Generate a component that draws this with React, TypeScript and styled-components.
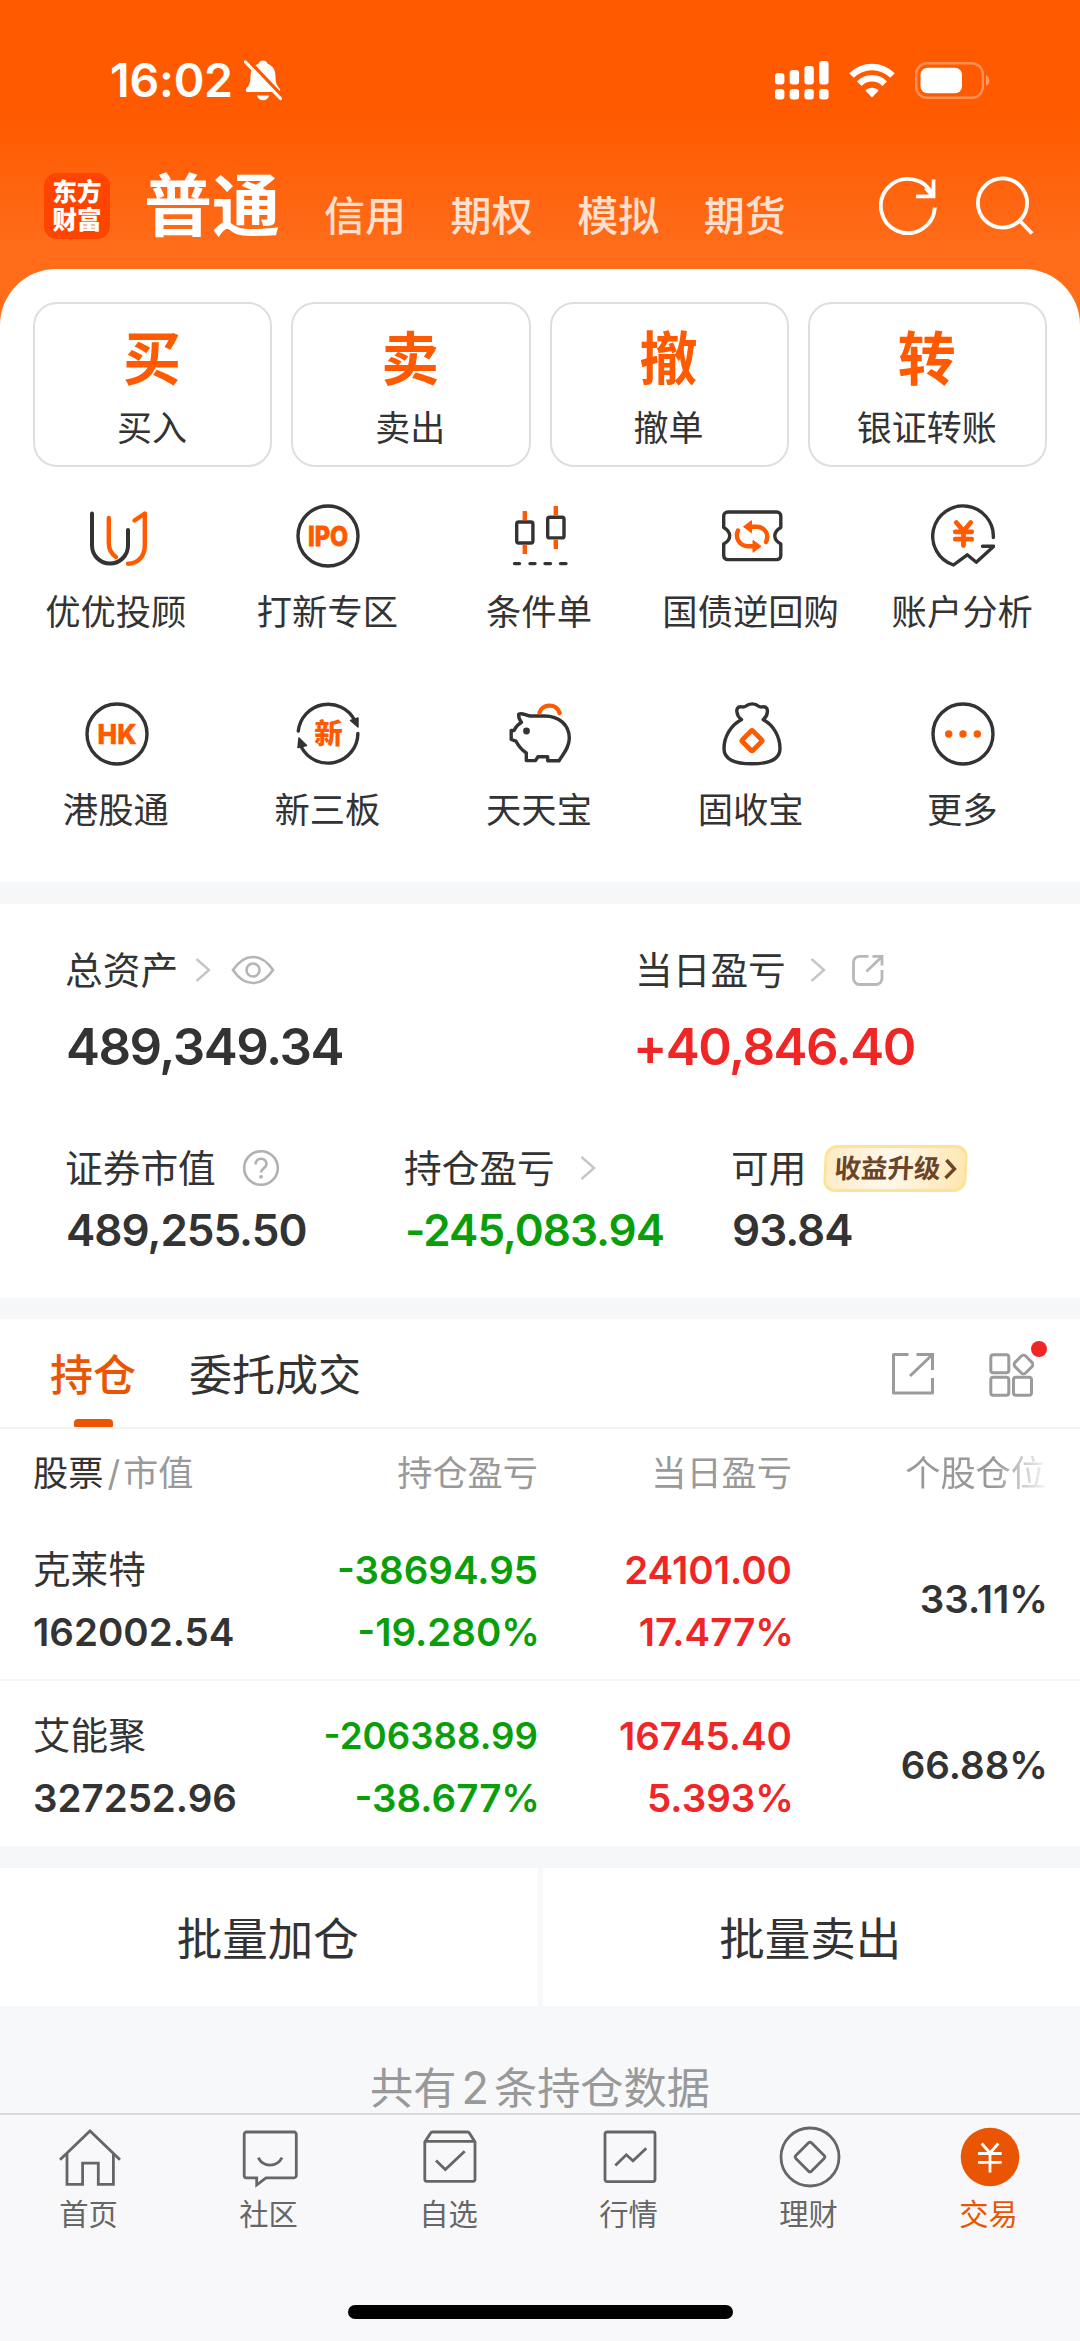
import React from "react";
import styled, { createGlobalStyle } from "styled-components";

const ORANGE = "#ff5a00";
const TAB_ORANGE = "#ea5504";
const INK = "#333333";
const RED = "#f02626";
const GREEN = "#0a9f0a";
const BAND = "#f5f7f9";

const GlobalStyle = createGlobalStyle`
  * { box-sizing: border-box; }
  body {
    margin: 0;
    background: #f8f8fa;
    color: ${INK};
    font-family: Inter, "Noto Sans CJK SC", sans-serif;
  }
  svg { display: block; flex: none; }
`;

const Screen = styled.div`
  width: 1080px;
  height: 2341px;
  display: flex;
  flex-direction: column;
  overflow: hidden;
  background: #f7f8fa;
`;

/* ---------- header ---------- */

const Top = styled.header`
  background: linear-gradient(180deg, ${ORANGE} 0, ${ORANGE} 112px, #ff6c1a 250px, #ff6c1a 340px);
`;

const StatusBar = styled.div`
  height: 160px;
  padding: 0 89px 0 110px;
  display: flex;
  align-items: center;
  color: #fff;
`;

const Clock = styled.span`
  font-size: 46.5px;
  line-height: 60px;
  font-weight: 600;
  letter-spacing: -0.2px;
  width: 134px;
  white-space: nowrap;
`;

const StatusIcons = styled.div`
  margin-left: auto;
  display: flex;
  align-items: center;
  gap: 20px;
`;

const NavBar = styled.nav`
  height: 109px;
  padding: 13px 45px 0 44px;
  display: flex;
  align-items: flex-start;
  color: #fff;
`;

const Logo = styled.div`
  width: 66px;
  height: 66px;
  border-radius: 13px;
  background: #ff4400;
  display: flex;
  flex-direction: column;
  align-items: center;
  justify-content: center;
  font-size: 24.5px;
  line-height: 28px;
  font-weight: 900;
`;

const Title = styled.h1`
  margin: 0 0 0 34px;
  font-size: 68px;
  line-height: 66px;
  font-weight: 700;
`;

const NavTabs = styled.div`
  margin: 16px 0 0 44px;
  display: flex;
  gap: 44.6px;
  font-size: 41px;
  line-height: 54px;
  font-weight: 500;
  color: #ffdfcd;
`;

const NavIcons = styled.div`
  margin: 1px 0 0 auto;
  display: flex;
  gap: 36px;
`;

const Panel = styled.main`
  height: 613px;
  padding-top: 33px;
  background: #fff;
  border-radius: 56px 56px 0 0;
`;

const Cards = styled.div`
  padding: 0 33px;
  display: grid;
  grid-template-columns: repeat(4, 1fr);
  gap: 19px;
`;

const Card = styled.button`
  height: 165px;
  padding: 20px 1px 0 0;
  border: 2px solid #dedede;
  border-radius: 24px;
  background: #fff;
  font-family: inherit;
  color: ${INK};
  display: flex;
  flex-direction: column;
  align-items: center;
`;

const CardGlyph = styled.span`
  font-size: 58px;
  line-height: 70px;
  font-weight: 700;
  color: ${ORANGE};
`;

const CardLabel = styled.span`
  margin-top: 10px;
  font-size: 35px;
  line-height: 48px;
`;

const Features = styled.div`
  padding: 37px 11px 0;
  display: grid;
  grid-template-columns: repeat(5, 1fr);
  grid-auto-rows: 198px;
`;

const Feature = styled.div`
  display: flex;
  flex-direction: column;
  align-items: center;
  font-size: 35.3px;
  line-height: 48px;
  gap: 21px;
`;

const FeatureLabel = styled.span`
  padding-right: 2px;
`;

/* ---------- assets ---------- */

const Band = styled.div<{ $h: number }>`
  height: ${(p) => p.$h}px;
  flex: none;
  background: ${BAND};
`;

const Assets = styled.section`
  height: 394px;
  padding: 42px 0 0 65px;
  background: #fff;
`;

const AssetRow = styled.div<{ $cols: string; $top?: number }>`
  display: grid;
  grid-template-columns: ${(p) => p.$cols};
  margin-top: ${(p) => p.$top ?? 0}px;
`;

const AssetLabel = styled.div`
  height: 48px;
  display: flex;
  align-items: center;
  font-size: 37.7px;
  line-height: 48px;
  white-space: nowrap;
`;

const IconGap = styled.span<{ $w: number }>`
  display: flex;
  margin-left: ${(p) => p.$w}px;
`;

const BigNumber = styled.div<{ $color?: string }>`
  margin: 23px 0 0 ${(p) => (p.$color ? -2 : 1)}px;
  font-size: 51px;
  line-height: 60px;
  font-weight: 600;
  letter-spacing: -1.5px;
  color: ${(p) => p.$color ?? INK};
`;

const MidNumber = styled.div<{ $color?: string }>`
  margin-top: 13px;
  padding-left: 1px;
  font-size: 44px;
  line-height: 50px;
  font-weight: 600;
  letter-spacing: -1px;
  color: ${(p) => p.$color ?? INK};
`;

const Badge = styled.span`
  margin-left: 18px;
  width: 143px;
  height: 47px;
  border: 3px solid #fde39a;
  border-radius: 12px;
  transform: skewX(-3deg);
  background: linear-gradient(100deg, #fdebc4 0%, #fff8ea 45%, #fff4dc 58%, #fee6b0 100%);
  display: flex;
  align-items: center;
  justify-content: center;
  gap: 3px;
  font-size: 26.5px;
  line-height: 41px;
  font-weight: 700;
  color: #6a452a;
`;

/* ---------- holdings ---------- */

const Holdings = styled.section`
  background: #fff;
`;

const TabRow = styled.div`
  height: 110px;
  padding: 0 34px 0 50px;
  border-bottom: 2px solid #f2f3f4;
  display: flex;
  align-items: stretch;
`;

const Tab = styled.div<{ $active?: boolean }>`
  margin-right: 53px;
  padding-top: 26px;
  display: flex;
  flex-direction: column;
  align-items: center;
  justify-content: space-between;
  font-size: 43px;
  line-height: 60px;
  font-weight: ${(p) => (p.$active ? 500 : 400)};
  color: ${(p) => (p.$active ? TAB_ORANGE : INK)};
`;

const Underline = styled.i`
  width: 39px;
  height: 8px;
  border-radius: 4px 4px 1px 1px;
  background: ${TAB_ORANGE};
`;

const TabTools = styled.div`
  margin-left: auto;
  padding-top: 33px;
  display: flex;
  gap: 53px;
`;

const GridTool = styled.div`
  position: relative;
  width: 58px;
`;

const RedDot = styled.i`
  position: absolute;
  left: 42.5px;
  top: -11px;
  width: 16px;
  height: 16px;
  border-radius: 50%;
  background: ${RED};
`;

const Row = styled.div<{ $h: number; $line?: boolean }>`
  height: ${(p) => p.$h}px;
  padding: 0 34px 0 33px;
  display: grid;
  grid-template-columns: 252px 253px 254px 254px;
  align-items: center;
  border-bottom: ${(p) => (p.$line ? "2px solid #f4f5f6" : "none")};
`;

const Head = styled.div<{ $right?: boolean; $fade?: boolean }>`
  font-size: 35.2px;
  line-height: 50px;
  color: #999;
  text-align: ${(p) => (p.$right ? "right" : "left")};
  ${(p) => p.$fade && "mask-image: linear-gradient(90deg, #000 80%, rgba(0,0,0,.1) 100%);"}
  b { font-weight: 400; color: ${INK}; }
  em { font-style: normal; margin: 0 3px 0 4px; }
`;

const Cell = styled.div<{ $right?: boolean; $color?: string; $drop?: number }>`
  display: flex;
  flex-direction: column;
  padding-top: ${(p) => p.$drop ?? 7}px;
  text-align: ${(p) => (p.$right ? "right" : "left")};
  font-size: 38.5px;
  line-height: 62px;
  font-weight: 600;
  color: ${(p) => p.$color ?? INK};
  white-space: nowrap;
`;

/* Amounts of ten characters and more are set a little smaller to stay in the column. */
const Amount = styled.span<{ $long?: boolean }>`
  font-size: ${(p) => (p.$long ? 36.7 : 38.5)}px;
`;

const Percent = styled.span`
  margin-right: -2px;
`;

const StockName = styled.span`
  font-size: 37.6px;
  font-weight: 400;
`;

const Actions = styled.div`
  display: grid;
  grid-template-columns: 1fr 1fr;
  gap: 5px;
`;

const Action = styled.button`
  height: 138px;
  padding: 0 2px 2px 0;
  border: 0;
  background: #fff;
  font-family: inherit;
  font-size: 45.5px;
  color: ${INK};
`;

const Summary = styled.div`
  height: 107px;
  padding-top: 52px;
  text-align: center;
  font-size: 43.2px;
  line-height: 60px;
  color: #999;
  span { margin: 0 5px; font-size: 45px; }
`;

/* ---------- bottom bar ---------- */

const BottomBar = styled.footer`
  flex: 1;
  background: #f8f8fa;
  border-top: 2px solid #d9d9dc;
  display: flex;
  flex-direction: column;
  align-items: center;
`;

const BottomTabs = styled.div`
  width: 100%;
  padding-top: 10px;
  display: grid;
  grid-template-columns: repeat(6, 1fr);
`;

const BottomTab = styled.div<{ $active?: boolean }>`
  display: flex;
  flex-direction: column;
  align-items: center;
  gap: 6px;
  font-size: 29.3px;
  line-height: 40px;
  color: ${(p) => (p.$active ? TAB_ORANGE : "#666")};
  span { padding-right: 3px; }
`;

const HomeIndicator = styled.div`
  width: 385px;
  height: 14px;
  margin-top: 70px;
  border-radius: 7px;
  background: #000;
`;

/* ---------- icons ---------- */

const Ink = ({ children }: { children: React.ReactNode }) => (
  <g fill="none" stroke={INK} strokeWidth={3.4} strokeLinecap="round" strokeLinejoin="round">{children}</g>
);
const Hot = ({ children, w = 4.4 }: { children: React.ReactNode; w?: number }) => (
  <g fill="none" stroke={ORANGE} strokeWidth={w} strokeLinecap="round" strokeLinejoin="round">{children}</g>
);

const featureIcons: Record<string, React.ReactNode> = {
  advisor: (
    <>
      <Ink><path strokeWidth={4} d="M7 9.5V41.5a18 18 0 0 0 36 0V26" /></Ink>
      <Hot><path d="M23.8 14V39.5c0 6.5 3 10.5 7.2 13.5M49.5 16.5L59.8 9.5V41.5c0 10-6 18-16.8 18.3" /></Hot>
    </>
  ),
  ipo: (
    <>
      <Ink><circle cx="32" cy="32" r="30" /></Ink>
      <text x="32" y="41.7" textAnchor="middle" textLength="40" lengthAdjust="spacingAndGlyphs" fontSize="26.5" fontWeight="800" fill={ORANGE} stroke={ORANGE} strokeWidth=".8" strokeLinejoin="round">IPO</text>
    </>
  ),
  candles: (
    <>
      <Ink>
        <rect x="8.7" y="18" width="16.2" height="21" rx="2" />
        <rect x="39.7" y="13.3" width="16.3" height="20.6" rx="2" />
        <path d="M6.500 59.600h5M22 59.600h5M37 59.600h5.500M52.500 59.600h5.500" />
      </Ink>
      <Hot><path strokeLinecap="butt" d="M16.8 7v9.200M16.800 40.700v9.300M47.800 2v9.500M47.800 35.600v9.500" /></Hot>
    </>
  ),
  ticket: (
    <>
      <Ink><path d="M7.700 8H56.800a4 4 0 0 1 4 4V23.500c-3.500 2-6 4.500-6 8.300s2.500 6.300 6 8.300V51.600a4 4 0 0 1-4 4H7.700a4 4 0 0 1-4-4V40.100c3.500-2 6-4.500 6-8.300s-2.500-6.300-6-8.300V12a4 4 0 0 1 4-4Z" /></Ink>
      <Hot><path d="M31 22.700h5.500c8 0 13.200 7.500 9.500 15.300M33 42.300h-5C20 42 14.500 34.500 18 26.500" /></Hot>
      <path d="M23.500 22.700l8-6v12zM41 42.300l-8-6v12z" fill={ORANGE} stroke={ORANGE} strokeLinejoin="round" />
    </>
  ),
  analysis: (
    <>
      <Ink><path d="M62.300 33.500A30.300 30.300 0 1 0 22.500 61L36.200 50.800L45.300 58.300L62.800 42.300H51.500" /></Ink>
      <Hot w={4.8}><path d="M25.300 18.500l7.200 8.500 7.200-8.500M32.500 27v14.500M24.300 27.800h16.400M24.300 35.200h16.400" /></Hot>
    </>
  ),
  hk: (
    <>
      <Ink><circle cx="32" cy="32" r="30" /></Ink>
      <text x="32" y="42" textAnchor="middle" textLength="39" lengthAdjust="spacingAndGlyphs" fontSize="27.5" fontWeight="800" fill={ORANGE} stroke={ORANGE} strokeWidth=".5" strokeLinejoin="round">HK</text>
    </>
  ),
  neeq: (
    <>
      <Ink>
        <path d="M2.300 29A30 30 0 0 1 58.800 18.500M61.900 31.500A30 30 0 0 1 5.300 45" />
      </Ink>
      <path d="M54.500 18.500l7.500-2.500v9zM3 36l7.500 7.500-8.500 2z" fill={INK} stroke={INK} strokeWidth="1.500" strokeLinejoin="round" />
      <text x="32.500" y="42" textAnchor="middle" fontSize="28.500" fontWeight="900" fill={ORANGE}>新</text>
    </>
  ),
  pig: (
    <>
      <Ink><path d="M10.700 12.300C14 10.300 17.500 13.500 22 14H34C52 13 61.300 24 61.300 36C61.300 46 55 52 51 58.800H39.700V54.800H30L27.500 58.600H18.300V51C12.500 47 10 43 8 39.200L3.200 37.500V28.500H6C8 24.500 10.500 22 13.500 20.300C11.500 18 10.500 15.500 10.700 12.300Z" /></Ink>
      <circle cx="18.500" cy="29" r="3.400" fill={INK} />
      <Hot><path d="M31.500 10.500C34 2 48.500.5 51.700 11" /></Hot>
    </>
  ),
  bag: (
    <>
      <Ink><path d="M21.500 17.700C16.500 14 14.500 4.800 20.500 4.800C22.500 4.800 24 5.500 26 4C29 1.200 35.500 1.200 38.200 4C40.200 5.500 41.500 4.800 43.500 4.800C49.500 4.800 48 14 43.200 17.700C54 23 60 35.500 60 46.500C60 57.500 50 61.800 32 61.800S4 57.500 4 46.500C4 35.500 10.500 23 21.500 17.700" /></Ink>
      <Hot w={4.8}><rect x="24.500" y="31.200" width="15" height="15" rx="1.500" transform="rotate(45 32 38.700)" /></Hot>
    </>
  ),
  more: (
    <>
      <Ink><circle cx="32" cy="32" r="30" /></Ink>
      <g fill={ORANGE}><circle cx="17.700" cy="32" r="3.700" /><circle cx="32" cy="32" r="3.700" /><circle cx="46.300" cy="32" r="3.700" /></g>
    </>
  ),
};

const bottomIcons: Record<string, React.ReactNode> = {
  home: <path d="M2 34.800L32 6L62 34.800M9 28.500V59.300H24.600V38.200H40.300V59.300H55.400V28.500" />,
  community: <path d="M8.500 7H56a2.300 2.300 0 0 1 2.300 2.300V50.500a2.300 2.300 0 0 1-2.300 2.300H28L18.700 60V52.800H8.500a2.300 2.300 0 0 1-2.300-2.300V9.300A2.300 2.300 0 0 1 8.500 7ZM20.300 32.600C25 42.500 39 42.500 44 32.600" />,
  watch: <path d="M6.800 17V54.300a2 2 0 0 0 2 2H55a2 2 0 0 0 2-2V17L51.500 8.200A2.300 2.300 0 0 0 49.500 7H14.500a2.300 2.300 0 0 0-2 1.200ZM7 16.400H57M18 35.600L27.300 44.600L46.700 26.300" />,
  market: <><rect x="7" y="7" width="50" height="49.600" rx="2" /><path d="M17.300 40.600L28.300 29.800L35 35.800L48.300 23.300" /></>,
  wealth: <><circle cx="32" cy="32" r="29" /><rect x="21" y="21" width="22" height="22" rx="2" transform="rotate(45 32 32)" /></>,
  trade: <><circle cx="32" cy="32" r="29.300" fill={TAB_ORANGE} stroke="none" /><path stroke="#fff" d="M23.700 18.500L32 28L40.300 18.500M32 28V47.500M20 28.500H43.700M20 37.300H43.700" /></>,
};

const Chevron = () => (
  <svg width="16" height="26" viewBox="0 0 16 26" fill="none" stroke="#c6c6c6" strokeWidth="2.4"><path d="M1.500 2L14 13L1.500 24" /></svg>
);

/* ---------- data ---------- */

const cards = [["买", "买入"], ["卖", "卖出"], ["撤", "撤单"], ["转", "银证转账"]];
const features = [
  ["advisor", "优优投顾"], ["ipo", "打新专区"], ["candles", "条件单"], ["ticket", "国债逆回购"], ["analysis", "账户分析"],
  ["hk", "港股通"], ["neeq", "新三板"], ["pig", "天天宝"], ["bag", "固收宝"], ["more", "更多"],
];
const stocks = [
  { name: "克莱特", value: "162002.54", hold: "-38694.95", holdPct: "-19.280%", day: "24101.00", dayPct: "17.477%", share: "33.11%" },
  { name: "艾能聚", value: "327252.96", hold: "-206388.99", holdPct: "-38.677%", day: "16745.40", dayPct: "5.393%", share: "66.88%" },
];
const bottomTabs = [["home", "首页"], ["community", "社区"], ["watch", "自选"], ["market", "行情"], ["wealth", "理财"], ["trade", "交易"]];

export default function App() {
  return (
    <Screen>
      <GlobalStyle />
      <Top>
        <StatusBar>
          <Clock>16:02</Clock>
          <svg width="38" height="42" viewBox="0 0 38 42">
            <path d="M19 1.500c2.500 0 4 1.300 4.600 3.300C29.500 7 31.500 12 31.500 17.500c0 7 1.500 9 4 12 1.500 2 .5 3.500-1.500 3.500H4c-2 0-3-1.700-1.500-3.700 2.500-3 4-5 4-11.800 0-5.500 2-10.500 7.900-12.700C15 2.800 16.500 1.500 19 1.500ZM13 36.500h12c-.5 3-3 4.800-6 4.800s-5.500-1.800-6-4.800Z" fill="#fff" />
            <path d="M3 0L39.500 38.500" stroke="#ff5800" strokeWidth="3.500" />
            <path d="M1.500 3L36.500 39.500" stroke="#fff" strokeWidth="3.200" strokeLinecap="round" />
          </svg>
          <StatusIcons>
            <svg width="54" height="39" viewBox="0 0 54 39" fill="#fff">
              <rect x="0" y="12" width="9.400" height="11.500" rx="3" /><rect x="14.700" y="9" width="9.400" height="14.500" rx="3" />
              <rect x="29.400" y="5" width="9.400" height="18.500" rx="3" /><rect x="44.200" y="0" width="9.400" height="23.500" rx="3" />
              <rect x="0" y="28" width="9.400" height="10.500" rx="3" /><rect x="14.700" y="28" width="9.400" height="10.500" rx="3" />
              <rect x="29.400" y="28" width="9.400" height="10.500" rx="3" /><rect x="44.200" y="28" width="9.400" height="10.500" rx="3" />
            </svg>
            <svg width="46" height="35" viewBox="0 0 46 35" fill="none" stroke="#fff" strokeWidth="6.500">
              <path d="M2.500 12.500C14 1 32 1 43.500 12.500M10.300 20.700C17.500 13.500 28.500 13.500 35.700 20.700" />
              <path d="M23 34.500L16.300 27.500C20 23.800 26 23.800 29.700 27.500Z" fill="#fff" stroke="none" />
            </svg>
            <svg width="76" height="37" viewBox="0 0 76 37">
              <rect x="1.200" y="1.200" width="66.600" height="34.600" rx="11" fill="none" stroke="#ff9158" strokeWidth="2.400" />
              <rect x="5.500" y="5.800" width="41.500" height="25.400" rx="7" fill="#fff" />
              <path d="M71 13c4.500 2 4.500 9 0 11Z" fill="#ff9c66" />
            </svg>
          </StatusIcons>
        </StatusBar>
        <NavBar>
          <Logo><span>东方</span><span>财富</span></Logo>
          <Title>普通</Title>
          <NavTabs><span>信用</span><span>期权</span><span>模拟</span><span>期货</span></NavTabs>
          <NavIcons>
            <svg width="60" height="64" viewBox="0 0 60 64" fill="none" stroke="#fff" strokeWidth="3.800">
              <path d="M55.800 33.500A27 27 0 1 1 53.500 21M37 22.300H54.500V5.500M46.500 14L54 22" />
            </svg>
            <svg width="60" height="64" viewBox="0 0 60 64" fill="none" stroke="#fff" strokeWidth="3.800">
              <circle cx="27.500" cy="29" r="24.600" /><path d="M44.500 46.500L57 59.500" />
            </svg>
          </NavIcons>
        </NavBar>
        <Panel>
          <Cards>
            {cards.map(([glyph, label]) => (
              <Card key={label}><CardGlyph>{glyph}</CardGlyph><CardLabel>{label}</CardLabel></Card>
            ))}
          </Cards>
          <Features>
            {features.map(([icon, label]) => (
              <Feature key={icon}>
                <svg width="64" height="64" viewBox="0 0 64 64">{featureIcons[icon]}</svg>
                <FeatureLabel>{label}</FeatureLabel>
              </Feature>
            ))}
          </Features>
        </Panel>
      </Top>

      <Band $h={22} />

      <Assets>
        <AssetRow $cols="570px 1fr">
          <div>
            <AssetLabel>
              总资产
              <IconGap $w={17}><Chevron /></IconGap>
              <IconGap $w={20}>
                <svg width="44" height="30" viewBox="0 0 44 30" fill="none" stroke="#b5b5b5" strokeWidth="2.600">
                  <path d="M2 15C8 6 14.500 2 22 2s14 4 20 13c-6 9-12.500 13-20 13S8 24 2 15Z" /><circle cx="22" cy="15" r="6.500" />
                </svg>
              </IconGap>
            </AssetLabel>
            <BigNumber>489,349.34</BigNumber>
          </div>
          <div>
            <AssetLabel>
              当日盈亏
              <IconGap $w={24}><Chevron /></IconGap>
              <IconGap $w={25}>
                <svg width="34" height="34" viewBox="0 0 34 34" fill="none" stroke="#b8b8b8" strokeWidth="2.800">
                  <path d="M17.500 3.300H8.500a6 6 0 0 0-6 6V25.500a6 6 0 0 0 6 6H25a6 6 0 0 0 6-6V17M21.500 3.300H31V12.500M30.500 4L15.500 18.500" />
                </svg>
              </IconGap>
            </AssetLabel>
            <BigNumber $color={RED}>+40,846.40</BigNumber>
          </div>
        </AssetRow>
        <AssetRow $cols="339px 327px 1fr" $top={67}>
          <div>
            <AssetLabel>
              证券市值
              <IconGap $w={26}>
                <svg width="38" height="38" viewBox="0 0 38 38">
                  <circle cx="19" cy="19" r="16.800" fill="none" stroke="#b0b0b0" strokeWidth="2.600" />
                  <path d="M13.500 15.500C13.500 8 24.500 8 24.500 15C24.500 19 19 19.500 19 23.500" fill="none" stroke="#b0b0b0" strokeWidth="2.600" />
                  <circle cx="19" cy="27.800" r="1.900" fill="#b0b0b0" />
                </svg>
              </IconGap>
            </AssetLabel>
            <MidNumber>489,255.50</MidNumber>
          </div>
          <div>
            <AssetLabel>持仓盈亏<IconGap $w={25}><Chevron /></IconGap></AssetLabel>
            <MidNumber $color={GREEN}>-245,083.94</MidNumber>
          </div>
          <div>
            <AssetLabel>
              可用
              <Badge>
                收益升级
                <svg width="13" height="22" viewBox="0 0 13 22" fill="none" stroke="#6a452a" strokeWidth="3.400"><path d="M2 2L10.500 11L2 20" /></svg>
              </Badge>
            </AssetLabel>
            <MidNumber>93.84</MidNumber>
          </div>
        </AssetRow>
      </Assets>

      <Band $h={21} />

      <Holdings>
        <TabRow>
          <Tab $active>持仓<Underline /></Tab>
          <Tab>委托成交</Tab>
          <TabTools>
            <svg width="44" height="44" viewBox="0 0 44 44" fill="none" stroke="#9b9b9b" strokeWidth="3">
              <path strokeLinejoin="round" d="M17.500 2.500H2.500V41H41.500V26" /><path d="M25.500 2.500H41.500V18M41 3L19 24" />
            </svg>
            <GridTool>
              <svg width="46" height="46" viewBox="0 0 46 46" fill="none" stroke="#9b9b9b" strokeWidth="3">
                <rect x="2.800" y="2.800" width="18" height="18" rx="2.500" /><rect x="2.800" y="25.300" width="18" height="18" rx="2.500" />
                <rect x="25.500" y="25.300" width="18" height="18" rx="2.500" /><rect x="28" y="5" width="15" height="15" rx="3" transform="rotate(45 35.500 12.500)" />
              </svg>
              <RedDot />
            </GridTool>
          </TabTools>
        </TabRow>
        <Row $h={87}>
          <Head><b>股票</b><em>/</em>市值</Head>
          <Head $right>持仓盈亏</Head>
          <Head $right>当日盈亏</Head>
          <Head $right $fade>个股仓位</Head>
        </Row>
        {stocks.map((s, i) => (
          <Row key={s.name} $h={165} $line={i === 0}>
            <Cell><StockName>{s.name}</StockName><span>{s.value}</span></Cell>
            <Cell $right $color={GREEN}><Amount $long={s.hold.length > 9}>{s.hold}</Amount><Percent>{s.holdPct}</Percent></Cell>
            <Cell $right $color={RED}><Amount>{s.day}</Amount><Percent>{s.dayPct}</Percent></Cell>
            <Cell $right $drop={2}><Percent>{s.share}</Percent></Cell>
          </Row>
        ))}
      </Holdings>

      <Band $h={22} />

      <Actions><Action>批量加仓</Action><Action>批量卖出</Action></Actions>
      <Summary>共有<span>2</span>条持仓数据</Summary>

      <BottomBar>
        <BottomTabs>
          {bottomTabs.map(([icon, label]) => (
            <BottomTab key={icon} $active={icon === "trade"}>
              <svg width="64" height="64" viewBox="0 0 64 64" fill="none" stroke="#666" strokeWidth="2.800">{bottomIcons[icon]}</svg>
              <span>{label}</span>
            </BottomTab>
          ))}
        </BottomTabs>
        <HomeIndicator />
      </BottomBar>
    </Screen>
  );
}
